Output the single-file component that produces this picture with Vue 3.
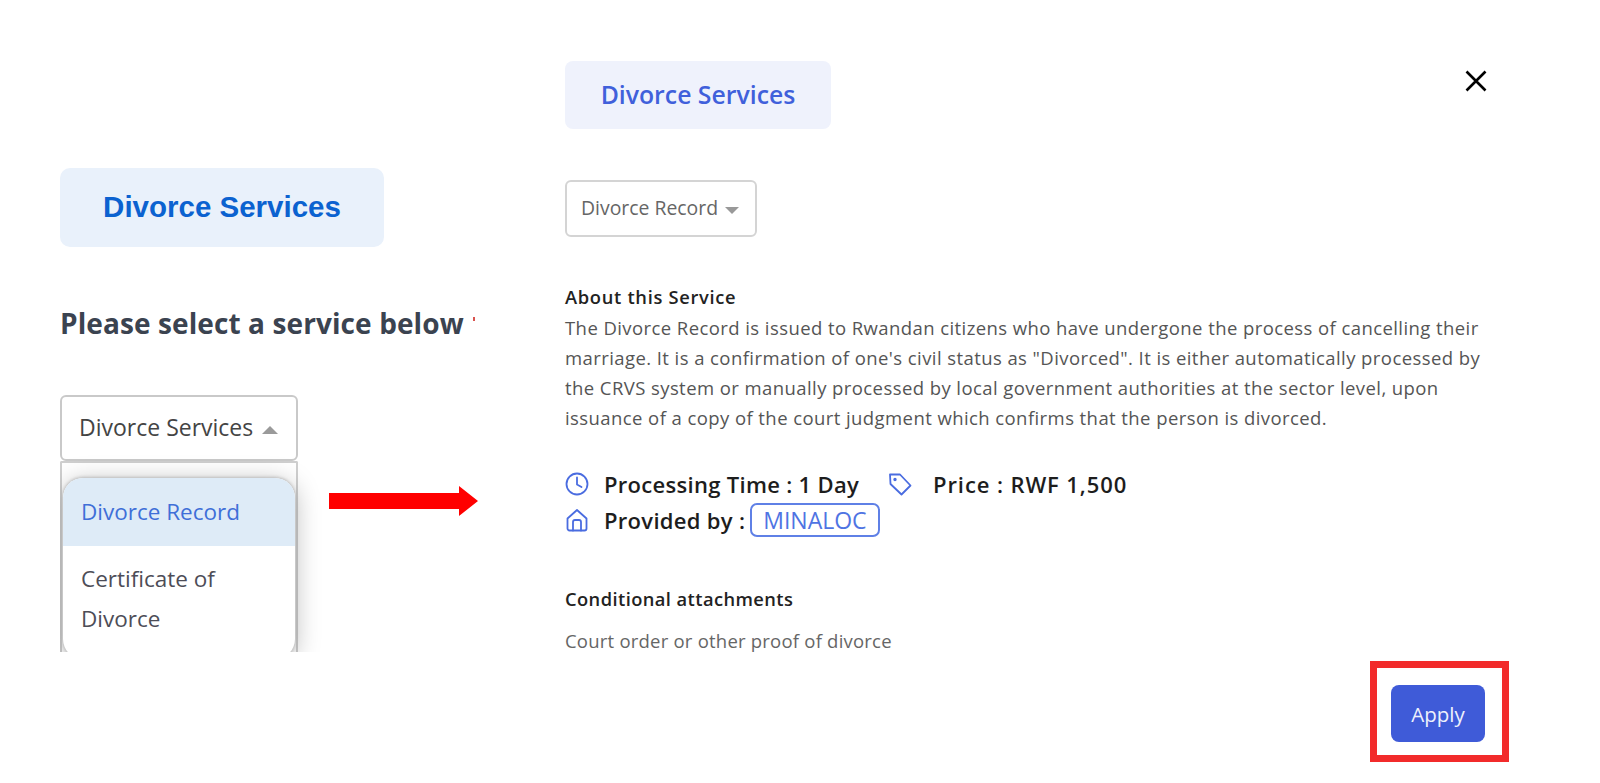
<template>
  <div class="page">
    <div class="shots">
      <!-- left screenshot -->
      <section class="left">
        <div class="left-badge">Divorce Services</div>
        <h2 class="left-title">Please select a service below<span class="speck"></span></h2>
        <div class="left-select">
          <span>Divorce Services</span>
          <span class="caret-up"></span>
        </div>
        <div class="left-drop">
          <ul class="menu">
            <li v-for="m in menu" :key="m.label" :class="{ active: m.active }">{{ m.label }}</li>
          </ul>
        </div>
      </section>

      <!-- arrow between the two -->
      <svg class="arrow" width="149" height="30" viewBox="0 0 149 30">
        <path d="M0 7H130V0L149 15L130 30V23H0Z" fill="#ff0000" />
      </svg>

      <!-- right screenshot -->
      <section class="right">
        <div class="right-head">
          <div class="right-badge">Divorce Services</div>
          <button class="x-btn" aria-label="Close">
            <svg width="22" height="22" viewBox="0 0 22 22">
              <path d="M1.5 1.5L20.5 20.5M20.5 1.5L1.5 20.5" stroke="#000" stroke-width="2.6" />
            </svg>
          </button>
        </div>

        <div class="right-select">
          <span>Divorce Record</span>
          <span class="caret-down"></span>
        </div>

        <h4 class="sub-title">About this Service</h4>
        <p class="about">
          The Divorce Record is issued to Rwandan citizens who have undergone the process of cancelling their<br />
          marriage. It is a confirmation of one's civil status as "Divorced". It is either automatically processed by<br />
          the CRVS system or manually processed by local government authorities at the sector level, upon<br />
          issuance of a copy of the court judgment which confirms that the person is divorced.
        </p>

        <div class="meta">
          <div class="meta-row">
            <svg class="ico" viewBox="0 0 24 24">
              <circle cx="12" cy="12" r="10.5" />
              <path d="M12 5.5V12.5L16.5 15" />
            </svg>
            <span class="meta-text">Processing Time : 1 Day</span>
            <svg class="ico tag" viewBox="0 0 24 24">
              <path d="M2 2.5H12L22.5 13.5L13.5 22.5L2.5 12Z" />
              <circle cx="7" cy="7.5" r="0.8" />
            </svg>
            <span class="meta-text price">Price : RWF 1,500</span>
          </div>
          <div class="meta-row">
            <svg class="ico" viewBox="0 0 24 24">
              <path d="M2.5 10.5L12 2L21.5 10.5V20.5A2 2 0 0 1 19.5 22.5H4.5A2 2 0 0 1 2.5 20.5Z" />
              <path d="M8 22.5V14A2 2 0 0 1 10 12H14A2 2 0 0 1 16 14V22.5" />
            </svg>
            <span class="meta-text">Provided by :</span>
            <span class="chip">MINALOC</span>
          </div>
        </div>

        <h4 class="sub-title cond">Conditional attachments</h4>
        <p class="cond-text">Court order or other proof of divorce</p>
      </section>
    </div>

    <div class="footer">
      <div class="callout">
        <button class="apply">Apply</button>
      </div>
    </div>
  </div>
</template>

<script setup>
const menu = [
  { label: 'Divorce Record', active: true },
  { label: 'Certificate of Divorce', active: false }
]
</script>

<style>
html, body { margin: 0; background: #fff; }
</style>

<style scoped>
.page {
  position: relative;
  width: 1600px;
  height: 783px;
  overflow: hidden;
  background: #fff;
  font-family: "Open Sans", "Noto Sans", sans-serif;
  box-sizing: border-box;
}

.shots {
  display: flex;
  height: 652px;
  overflow: hidden;
  box-sizing: border-box;
  padding-left: 60px;
}

/* left */
.left {
  width: 416px;
  margin-right: 89px;
  padding: 168px 0 0 0;
  overflow: hidden;
  flex: none;
}
.left-badge {
  width: 324px;
  height: 79px;
  box-sizing: border-box;
  padding-bottom: 2px;
  background: #e9f1fb;
  border-radius: 10px;
  color: #0b62d0;
  font: 700 29.5px "Liberation Sans", sans-serif;
  display: flex;
  align-items: center;
  justify-content: center;
}
.left-title {
  margin: 56px 0 0;
  font-size: 28px;
  letter-spacing: 0.1px;
  line-height: 40px;
  font-weight: 700;
  color: #3b4350;
  white-space: nowrap;
  display: flex;
  align-items: center;
}
.speck {
  width: 2px;
  height: 4px;
  margin-left: 9px;
  background: #d9534f;
  margin-top: -8px;
}
.left-select {
  margin-top: 52px;
  width: 238px;
  height: 66px;
  box-sizing: border-box;
  border: 2px solid #c9c9c9;
  border-radius: 6px;
  display: flex;
  align-items: center;
  padding: 0 0 2px 17px;
  gap: 9px;
  font-size: 23px;
  color: #444;
}
.caret-up {
  width: 0;
  height: 0;
  border-left: 8px solid transparent;
  border-right: 8px solid transparent;
  border-bottom: 8px solid #9a9a9a;
  margin-top: 5px;
}
.left-drop {
  width: 238px;
  height: 200px;
  box-sizing: border-box;
  border: 2px solid #cfcfcf;
  border-bottom: none;
  border-radius: 2px 2px 0 0;
  padding: 15px 1px 0;
}
.menu {
  list-style: none;
  margin: 0;
  padding: 0;
  height: 181px;
  border-radius: 20px;
  overflow: hidden;
  background: #fff;
  box-shadow: 0 0 3px 1px #bdbdbd, 0 4px 26px rgba(0,0,0,0.28);
}
.menu li {
  padding: 14px 18px;
  font-size: 22.5px;
  line-height: 40px;
  color: #4d4d57;
}
.menu li + li { padding-top: 13px; }
.menu li.active {
  background: #deebf7;
  color: #3f6fd8;
}

/* red arrow, sits over the gap */
.arrow {
  position: absolute;
  left: 329px;
  top: 486px;
}

/* right */
.right {
  width: 925px;
  padding-top: 61px;
  flex: none;
  color: #555;
}
.right-head {
  display: flex;
  justify-content: space-between;
  align-items: flex-start;
}
.right-badge {
  width: 266px;
  height: 68px;
  background: #eff2fc;
  border-radius: 8px;
  color: #4060db;
  font-size: 24.8px;
  font-weight: 600;
  display: flex;
  align-items: center;
  justify-content: center;
  padding-bottom: 2px;
  box-sizing: border-box;
}
.x-btn {
  border: none;
  background: transparent;
  padding: 0;
  margin: 9px 3px 0 0;
  line-height: 0;
}
.right-select {
  margin-top: 51px;
  width: 192px;
  height: 57px;
  box-sizing: border-box;
  border: 2px solid #d4d4d4;
  border-radius: 6px;
  display: flex;
  align-items: center;
  padding: 0 0 2px 14px;
  gap: 7px;
  font-size: 19.4px;
  color: #666;
}
.caret-down {
  width: 0;
  height: 0;
  border-left: 7px solid transparent;
  border-right: 7px solid transparent;
  border-top: 7px solid #999;
  margin-top: 5px;
}
.sub-title {
  margin: 46px 0 0;
  font-size: 18.3px;
  letter-spacing: 0.7px;
  line-height: 28px;
  font-weight: 600;
  color: #222;
}
.about {
  margin: 2px 0 0;
  font-size: 18.5px;
  letter-spacing: 0.42px;
  line-height: 30px;
  color: #555;
  white-space: nowrap;
}
.meta {
  margin-top: 33px;
}
.meta-row {
  display: flex;
  align-items: center;
  height: 36px;
}
.ico {
  width: 24px;
  height: 24px;
  fill: none;
  stroke: #4a6ce0;
  stroke-width: 1.8;
  stroke-linejoin: round;
  stroke-linecap: round;
  flex: none;
}
.ico.tag { margin-left: 29px; }
.meta-text {
  margin-left: 15px;
  font-size: 22px;
  letter-spacing: 0.3px;
  font-weight: 600;
  color: #1d1d1d;
}
.ico.tag + .meta-text { margin-left: 21px; }
.meta-text.price { letter-spacing: 0.9px; }
.chip {
  margin-left: 5px;
  height: 34px;
  box-sizing: border-box;
  border: 2px solid #5f80e6;
  border-radius: 7px;
  padding: 0 11px;
  color: #4f74e3;
  font-size: 23px;
  line-height: 30px;
}
.sub-title.cond {
  margin-top: 47px;
  letter-spacing: 0.43px;
}
.cond-text {
  margin: 14px 0 0;
  font-size: 18.5px;
  letter-spacing: 0.22px;
  line-height: 28px;
  color: #666;
}

/* footer */
.footer {
  display: flex;
  justify-content: flex-end;
  padding: 9px 91px 0 0;
}
.callout {
  width: 139px;
  height: 101px;
  box-sizing: border-box;
  border: 7px solid #f22b2b;
  padding: 17px 0 0 14px;
}
.apply {
  display: block;
  width: 94px;
  height: 57px;
  border: none;
  border-radius: 8px;
  background: #3f5bd8;
  color: #eef1fc;
  font-family: inherit;
  font-size: 20.5px;
}
</style>
